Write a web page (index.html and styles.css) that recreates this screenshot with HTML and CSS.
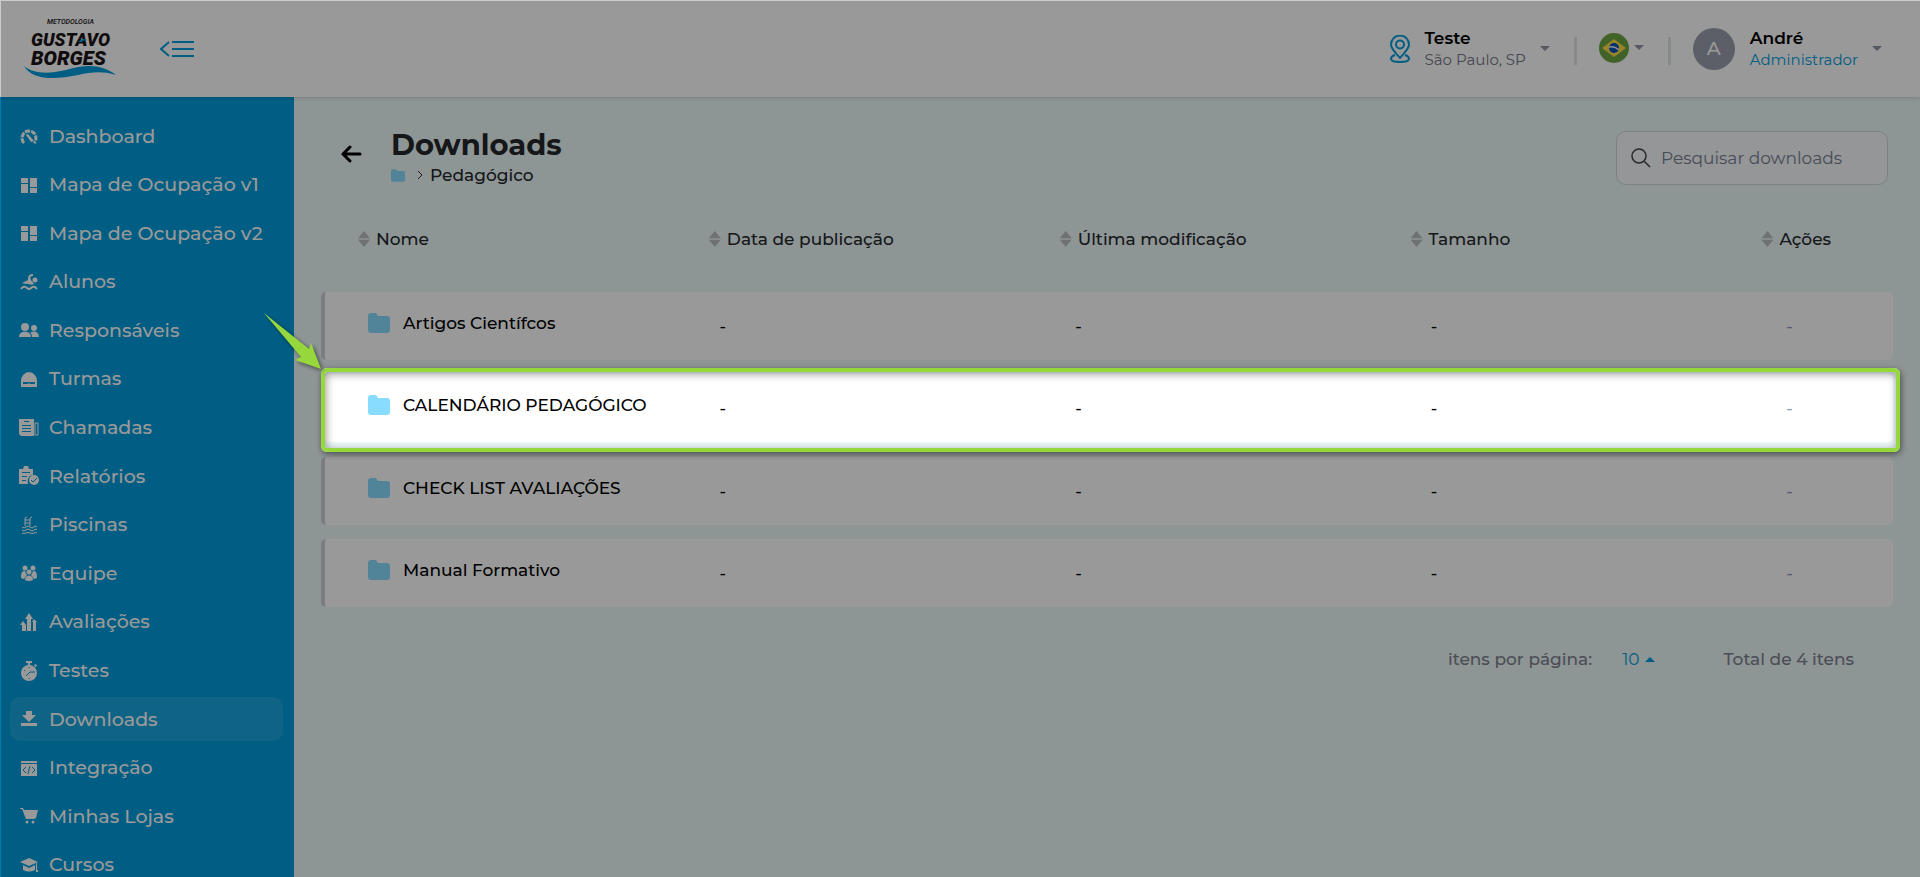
FILE: index.html
```html
<!DOCTYPE html>
<html lang="pt-BR">
<head>
    <meta charset="UTF-8">
    <meta name="viewport" content="width=device-width, initial-scale=1.0">
    <title>Downloads</title>
    <link rel="stylesheet" href="styles.css">
</head>
<body>
    <header class="topbar">
        <a href="#" class="logo" aria-label="Metodologia Gustavo Borges">
            <svg width="94" height="62" viewBox="0 0 94 62">
                <g class="logo-text">
                    <text x="23" y="6" class="small">METODOLOGIA</text>
                    <text x="7" y="28">GUSTAVO</text>
                    <text x="7" y="47" class="big">BORGES</text>
                </g>
                <path d="M0 48c10 8 24 8 42 4 20-6 36-6 50 5-14-4-24-3-38 0-24 5-46 5-54-9z" fill="#009ddc"/>
                <path d="M54 24q5-5 9-2-4 0-5 2z" fill="#009ddc"/>
            </svg>
        </a>
        <button type="button" class="menu-toggle" aria-label="Recolher menu">
            <svg width="34" height="16" viewBox="0 0 34 16" fill="none" stroke="#009ddc" stroke-width="2">
                <path d="M9 1 1 8l8 7M12 1h22M12 8h22M12 15h22"/>
            </svg>
        </button>

        <div class="topbar-right">
            <button type="button" class="unit">
                <svg width="20" height="28" viewBox="0 0 20 28" fill="none" stroke="#009ddc" stroke-width="2">
                    <path d="M10 23C6 18 1 14 1 9.500a9 9 0 0 1 18 0C19 14 14 18 10 23z"/>
                    <circle cx="10" cy="9.500" r="4"/>
                    <path d="M5 20c-3 1-4 2-4 3.500C1 26 5 27 10 27s9-1 9-3.500c0-1.500-1-2.500-4-3.500"/>
                </svg>
                <span class="info">
                    <strong>Teste</strong>
                    <span>São Paulo, SP</span>
                </span>
                <i class="caret"></i>
            </button>
            <i class="divider"></i>
            <button type="button" class="language" aria-label="Idioma">
                <svg width="30" height="30" viewBox="0 0 30 30">
                    <circle cx="15" cy="15" r="15" fill="#6da544"/>
                    <path d="M15 6 27 15 15 24 3 15z" fill="#ffda44"/>
                    <circle cx="15" cy="15" r="5" fill="#0052b4"/>
                    <path d="M10 14c4-1 7 0 10 3" fill="none" stroke="#f0f0f0" stroke-width="1.500"/>
                </svg>
                <i class="caret"></i>
            </button>
            <i class="divider"></i>
            <button type="button" class="user">
                <span class="avatar">A</span>
                <span class="info">
                    <strong>André</strong>
                    <span class="role">Administrador</span>
                </span>
                <i class="caret"></i>
            </button>
        </div>
    </header>

    <div class="layout">
        <nav class="sidebar">
            <ul class="menu">
                <li><a href="#"><svg viewBox="0 0 20 20"><path d="M5 17a7 7 0 1 1 10 0" fill="none" stroke="currentColor" stroke-width="3" stroke-dasharray="5 1"/><path d="m7 9 2-1 6 7-3 1z"/></svg>Dashboard</a></li>
                <li><a href="#"><svg viewBox="0 0 20 20"><path d="M2 3h7v5H2zM2 9h7v9H2zM11 3h7v9h-7zM11 13h7v5h-7z"/></svg>Mapa de Ocupação v1</a></li>
                <li><a href="#"><svg viewBox="0 0 20 20"><path d="M2 3h7v5H2zM2 9h7v9H2zM11 3h7v9h-7zM11 13h7v5h-7z"/></svg>Mapa de Ocupação v2</a></li>
                <li><a href="#"><svg viewBox="0 0 20 20"><circle cx="16" cy="8" r="2.500"/><path d="M14 2v2c-3 0-3 2-2 4l3 4c-4 2-5-1-8 0l-4-1 6-3c0-4 1-6 5-6z"/><path d="M2 17q3-4 6-1 2 2 4 0 3-3 6 1" fill="none" stroke="currentColor" stroke-width="2"/></svg>Alunos</a></li>
                <li><a href="#"><svg viewBox="0 0 20 20"><circle cx="6" cy="7" r="4"/><circle cx="15" cy="8" r="3"/><path d="M0 17c0-7 12-7 12 0zM13 17c0-2-1-4-2-4 4-3 9-1 9 4z"/></svg>Responsáveis</a></li>
                <li><a href="#"><svg viewBox="0 0 20 20"><path d="M2 12a8 9 0 0 1 16 0v6H2zm2 1v2h5l1-1 1 1h5v-2z" fill-rule="evenodd"/></svg>Turmas</a></li>
                <li><a href="#"><svg viewBox="0 0 20 20"><path d="M0 1h15v17H2l-2-2zm3 6v1h9V7zm0 3v1h9v-1zm0 3v1h9v-1zM5 3v1h5V3z" fill-rule="evenodd"/><path d="M16 5h3v12h-3z" fill="none" stroke="currentColor"/></svg>Chamadas</a></li>
                <li><a href="#"><svg viewBox="0 0 20 20"><path d="M0 3h4l1-3h4l1 3h4v6c-4 0-6 4-5 9H0zm3 3v1h8V6zm0 4v1h5v-1zm0 4v1h4v-1z" fill-rule="evenodd"/><circle cx="15" cy="14" r="5"/><path d="m12 14 2 2 4-4" class="cut"/></svg>Relatórios</a></li>
                <li><a href="#"><svg viewBox="0 0 20 20" class="line"><path d="M6 11V4q0-2 2-2M11 11V4q0-2 2-2M6 5h5M6 8h5M3 12q2 2 4 0t4 0 4 0 3 0M3 15q2 2 4 0t4 0 4 0 3 0M3 18q2 1 4 0t4 0 4 0 3 0"/></svg>Piscinas</a></li>
                <li><a href="#"><svg viewBox="0 0 20 20"><circle cx="6" cy="5" r="2.500"/><circle cx="14" cy="5" r="2.500"/><circle cx="10" cy="9" r="2.500"/><path d="M2 15c0-6 1-7 4-7q1 3 2 4l-3 4zM18 15c0-6-1-7-4-7q-1 3-2 4l3 4zM6 17c0-6 8-6 8 0q-4 2-8 0z"/></svg>Equipe</a></li>
                <li><a href="#"><svg viewBox="0 0 20 20"><path d="M8 19V7H6l4-6 4 6h-2v12zM3 19v-6H1l3-4 3 4v6zM14 19v-9h-1l2-3 3 3h-1v9z"/></svg>Avaliações</a></li>
                <li><a href="#"><svg viewBox="0 0 20 20"><path d="M7 0h6v2h-2v3H9V2H7zM15 4l2-1 1 2-2 1z"/><circle cx="10" cy="12" r="8"/><path d="m7 15 4-4h5M5 9l1 1M10 6v1M10 17v1" class="cut"/></svg>Testes</a></li>
                <li class="active"><a href="#"><svg viewBox="0 0 20 20"><path d="M7 2h6v4h4l-7 7-7-7h4zM2 14h16v3H2z"/></svg>Downloads</a></li>
                <li><a href="#"><svg viewBox="0 0 20 20"><path d="M2 3h16v2H2zM2 6h16v12H2z"/><path d="m7 9-3 3 3 3M13 9l3 3-3 3M11 8l-2 8" class="cut"/></svg>Integração</a></li>
                <li><a href="#"><svg viewBox="0 0 20 20"><path d="M1 2h3l1 2h14l-2 8q-1 1-3 1H7L3 3H1z"/><circle cx="8" cy="16" r="1.500"/><circle cx="14" cy="16" r="1.500"/></svg>Minhas Lojas</a></li>
                <li><a href="#"><svg viewBox="0 0 20 20"><path d="m10 3 9 4-9 4-9-4zM4 10l6 3 6-3v5q-6 3-12 0zM17 8h1v7h1v2h-2z"/></svg>Cursos</a></li>
            </ul>
        </nav>

        <main class="content">
            <div class="page-header">
                <a href="#" class="back" aria-label="Voltar">
                    <svg width="21" height="18" viewBox="0 0 21 18" fill="none" stroke="#000" stroke-width="3" stroke-linecap="round" stroke-linejoin="round">
                        <path d="M9 2 2 9l7 7M2 9h17"/>
                    </svg>
                </a>
                <div class="heading">
                    <h1>Downloads</h1>
                    <div class="breadcrumb">
                        <svg class="folder" viewBox="0 0 22 20"><path d="M0 3q0-3 3-3h5l2 3h9q3 0 3 3v11q0 3-3 3H3q-3 0-3-3z"/></svg>
                        <svg class="chevron" viewBox="0 0 6 8"><path d="m1 0 4 4-4 4"/></svg>
                        <span>Pedagógico</span>
                    </div>
                </div>
                <label class="search">
                    <svg width="20" height="20" viewBox="0 0 20 20" fill="none" stroke="#444" stroke-width="1.500"><circle cx="8" cy="8" r="7"/><path d="m13 13 6 6"/></svg>
                    <input type="text" placeholder="Pesquisar downloads" aria-label="Pesquisar downloads">
                </label>
            </div>

            <table class="files">
                <thead>
                    <tr>
                        <th><i class="sort"></i>Nome</th>
                        <th><i class="sort"></i>Data de publicação</th>
                        <th><i class="sort"></i>Última modificação</th>
                        <th><i class="sort"></i>Tamanho</th>
                        <th><i class="sort"></i>Ações</th>
                    </tr>
                </thead>
                <tbody>
                    <tr>
                        <td><svg class="folder" viewBox="0 0 22 20"><path d="M0 3q0-3 3-3h5l2 3h9q3 0 3 3v11q0 3-3 3H3q-3 0-3-3z"/></svg>Artigos Científcos</td>
                        <td>-</td><td>-</td><td>-</td><td>-</td>
                    </tr>
                    <tr>
                        <td><svg class="folder" viewBox="0 0 22 20"><path d="M0 3q0-3 3-3h5l2 3h9q3 0 3 3v11q0 3-3 3H3q-3 0-3-3z"/></svg>CALENDÁRIO PEDAGÓGICO</td>
                        <td>-</td><td>-</td><td>-</td><td>-</td>
                    </tr>
                    <tr>
                        <td><svg class="folder" viewBox="0 0 22 20"><path d="M0 3q0-3 3-3h5l2 3h9q3 0 3 3v11q0 3-3 3H3q-3 0-3-3z"/></svg>CHECK LIST AVALIAÇÕES</td>
                        <td>-</td><td>-</td><td>-</td><td>-</td>
                    </tr>
                    <tr>
                        <td><svg class="folder" viewBox="0 0 22 20"><path d="M0 3q0-3 3-3h5l2 3h9q3 0 3 3v11q0 3-3 3H3q-3 0-3-3z"/></svg>Manual Formativo</td>
                        <td>-</td><td>-</td><td>-</td><td>-</td>
                    </tr>
                </tbody>
            </table>

            <div class="pagination">
                <span>itens por página:</span>
                <button type="button" class="per-page">10<i class="caret up"></i></button>
                <span>Total de 4 itens</span>
            </div>
        </main>
    </div>

    <!-- tour -->
    <div class="tour">
        <div class="spotlight"></div>
        <svg class="arrow" width="60" height="60" viewBox="0 0 60 60">
            <path d="M0 0 45 36 47 30 57 56 31 47 37 44z" fill="#96d83c"/>
        </svg>
    </div>
</body>
</html>
```
FILE: styles.css
```css
* {
    box-sizing: border-box;
}
body {
    margin: 0;
    height: 100vh;
    overflow: hidden;
    font-family: Montserrat, Inter, sans-serif;
    font-size: 16px;
    font-weight: 500;
    color: #23272b;
    background: #edf8f8;
}
button {
    display: flex;
    align-items: center;
    padding: 0;
    border: none;
    background: none;
    font: inherit;
    text-align: left;
    cursor: pointer;
}
a {
    color: inherit;
    text-decoration: none;
}

/* topbar */
.topbar {
    position: relative;
    display: flex;
    align-items: center;
    height: 97px;
    padding: 0 38px 0 24px;
    background: #fff;
    box-shadow: 0 1px 4px rgba(0, 0, 0, 0.15);
}
.logo svg {
    display: block;
}
.logo-text {
    font-family: "Liberation Sans Narrow", Roboto, sans-serif;
    font-size: 18px;
    font-style: italic;
    font-weight: 900;
    fill: #1c1517;
}
.logo-text .small {
    font-size: 7px;
    font-weight: 500;
}
.logo-text .big {
    font-size: 20px;
}
.menu-toggle {
    margin-left: 42px;
}
.menu-toggle svg {
    display: block;
}
.topbar-right {
    display: flex;
    align-items: center;
    margin-left: auto;
}
.info {
    display: flex;
    flex-direction: column;
    margin: 0 14px 0 15px;
    font-size: 15px;
    font-weight: 400;
    line-height: 22px;
    color: #727989;
}
.info strong {
    font-size: 17px;
    font-weight: 600;
    color: #000;
}
.info .role {
    color: #009ddc;
}
.caret {
    border: 5px solid transparent;
    border-top-color: #8f95a3;
    border-bottom: none;
}
.caret.up {
    border-top: none;
    border-bottom: 5px solid #009ddc;
}
.divider {
    width: 3px;
    height: 28px;
    margin: 4px 22px 0 24px;
    background: #dfe6e8;
}
.language {
    gap: 5px;
    margin-bottom: 2px;
}
.avatar {
    width: 42px;
    height: 42px;
    border-radius: 50%;
    background: #999fae;
    color: #fff;
    font-size: 19px;
    line-height: 42px;
    text-align: center;
}

/* sidebar */
.layout {
    display: flex;
    height: calc(100vh - 97px);
}
.sidebar {
    flex: 0 0 294px;
    overflow: hidden;
    padding: 17px 11px 0 10px;
    background: #009ddc;
}
.menu {
    display: flex;
    flex-direction: column;
    justify-content: space-between;
    min-height: 773px;
    margin: 0;
    padding: 0;
    list-style: none;
}
.menu a {
    display: flex;
    align-items: center;
    gap: 10px;
    height: 44px;
    padding-left: 9px;
    border-radius: 10px;
    color: #fff;
    font-size: 19px;
}
.menu svg {
    width: 20px;
    height: 20px;
    fill: currentColor;
}
.menu .cut {
    fill: none;
    stroke: #009ddc;
    stroke-width: 1px;
}
.menu .line {
    fill: none;
    stroke: currentColor;
}
.menu .active a {
    background: rgba(255, 255, 255, 0.1);
}

/* content */
.content {
    flex: 1;
    min-width: 0;
    padding: 28px 27px 0 27px;
}
.page-header {
    display: flex;
    align-items: flex-start;
}
.back {
    margin: 20px 29px 0 20px;
}
.back svg {
    display: block;
}
h1 {
    margin: 2px 0 0;
    font-size: 29px;
    font-weight: 700;
    line-height: 36px;
}
.breadcrumb {
    display: flex;
    align-items: center;
    font-size: 17px;
    line-height: 24px;
}
.folder {
    width: 22px;
    height: 20px;
    fill: #88dcff;
}
.breadcrumb .folder {
    width: 14px;
    height: 13px;
}
.chevron {
    width: 6px;
    height: 8px;
    margin: 0 7px 0 12px;
    fill: none;
    stroke: #333;
}
.search {
    display: flex;
    align-items: center;
    gap: 10px;
    width: 272px;
    height: 54px;
    margin: 6px 5px 0 auto;
    padding: 0 14px;
    border: 1px solid #d0d6da;
    border-radius: 10px;
    background: #f9fafd;
}
.search input {
    flex: 1;
    min-width: 0;
    padding: 0;
    border: none;
    background: none;
    font: inherit;
    font-size: 17px;
    font-weight: 400;
}
.search input::placeholder {
    color: #76808f;
}

/* table */
.files,
.files tbody {
    display: flex;
    flex-direction: column;
}
.files {
    gap: 41px;
    margin-top: 40px;
}
.files tbody {
    justify-content: space-between;
    min-height: 315px;
}
.files tr {
    display: grid;
    align-items: center;
}
.files thead tr {
    grid-template-columns: repeat(4, 8fr) 3fr;
    padding-left: 37px;
}
.files th {
    display: flex;
    align-items: center;
    gap: 6px;
    padding: 0;
    font-size: 17px;
    font-weight: 500;
    line-height: 24px;
}
.sort {
    width: 12px;
    height: 16px;
    background: #b9bec0;
    clip-path: polygon(50% 0, 100% 45%, 0 45%, 0 55%, 100% 55%, 50% 100%, 0 55%, 0 45%);
}
.files tbody tr {
    grid-template-columns: repeat(4, 10fr) 3fr;
    height: 68px;
    padding-left: 39px;
    border-left: 4px solid #cdd1d5;
    border-radius: 5px;
    background: #fff;
}
.files td {
    padding: 0;
    font-size: 17px;
    line-height: 24px;
    color: #000;
}
.files td:first-child {
    display: flex;
    align-items: center;
    gap: 13px;
    padding: 0 0 6px 4px;
}
.files td:last-child {
    color: #8f9bb8;
}

/* pagination */
.pagination {
    display: flex;
    justify-content: flex-end;
    align-items: center;
    margin-top: 40px;
    padding-right: 39px;
    font-size: 17px;
    line-height: 24px;
    color: #7e8290;
}
.per-page {
    gap: 5px;
    margin: 0 69px 0 30px;
    font-weight: 400;
    color: #009ddc;
}

/* tour */
.tour {
    position: fixed;
    inset: 0;
    overflow: hidden;
    border-top: 1px solid rgba(0, 0, 0, 0.2);
    border-left: 1px solid rgba(0, 0, 0, 0.2);
    pointer-events: none;
}
.spotlight {
    position: absolute;
    top: 367px;
    left: 320px;
    right: 20px;
    height: 84px;
    border: 4px solid #96d83c;
    border-radius: 6px;
    box-shadow: 1px 2px 6px rgba(0, 0, 0, 0.5), inset 1px 2px 8px rgba(0, 0, 0, 0.4), 0 0 0 2000px rgba(0, 0, 0, 0.4);
}
.arrow {
    position: absolute;
    top: 312px;
    left: 263px;
    filter: drop-shadow(2px 2px 2px rgba(0, 0, 0, 0.5));
}
```
